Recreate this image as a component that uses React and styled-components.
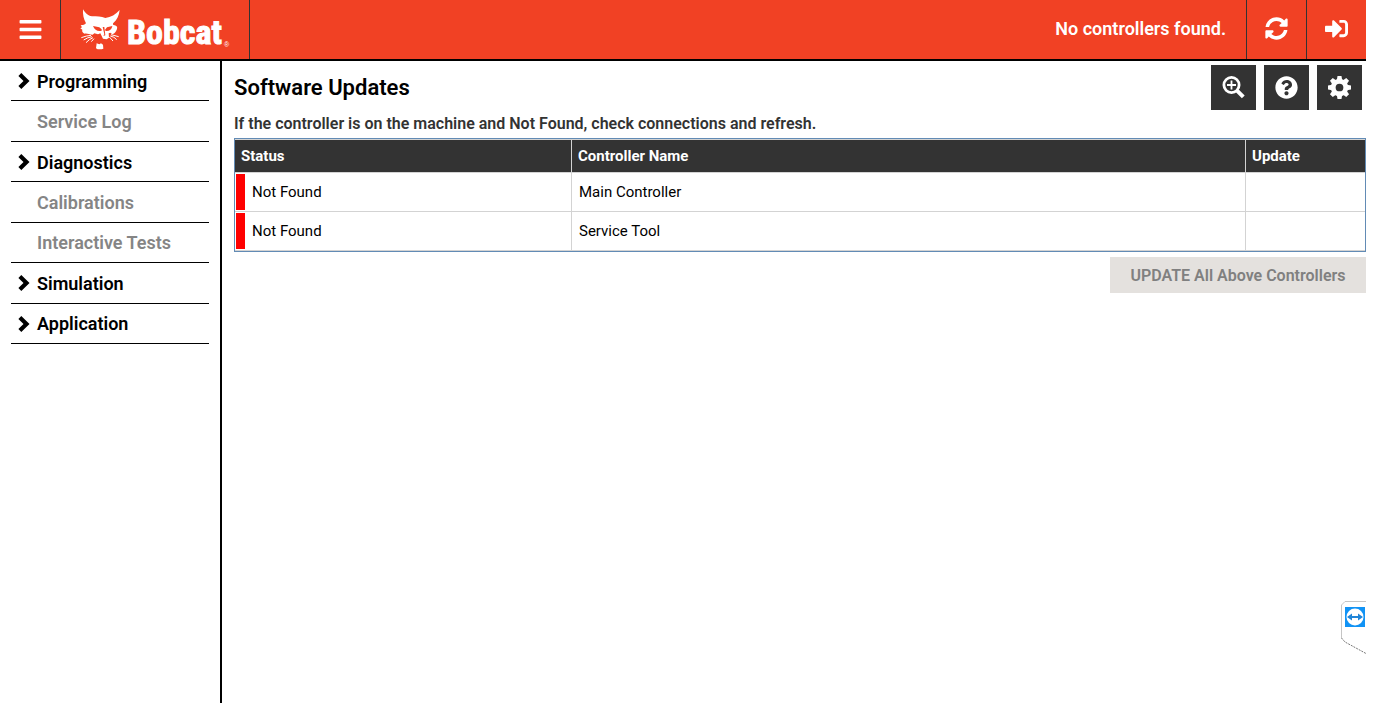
import React from "react";
import styled, { createGlobalStyle } from "styled-components";
import {
  FaBars,
  FaSyncAlt,
  FaSignInAlt,
  FaQuestionCircle,
} from "react-icons/fa";

const GlobalStyle = createGlobalStyle`
  * { box-sizing: border-box; }
  body { margin: 0; background: #fff; color: #000; font-family: Roboto, "Liberation Sans", sans-serif; }
  button { font-family: inherit; cursor: pointer; }
`;

const Page = styled.div`
  display: flex;
  flex-direction: column;
  min-height: 100vh;
  padding-right: 18px;
`;

const Header = styled.header`
  display: flex;
  align-items: stretch;
  height: 61px;
  background: #f14124;
  border-bottom: 2px solid #000;
  color: #fff;
`;

const HeaderButton = styled.button`
  display: flex;
  align-items: center;
  justify-content: center;
  width: ${(p) => (p.$first ? "61px" : "60px")};
  padding: ${(p) => (p.$first ? "0 0 1px" : "0 1px 2px 0")};
  border: 0 solid #333;
  border-width: ${(p) => (p.$first ? "0 1px 0 0" : "0 0 0 1px")};
  background: none;
  color: #fff;
  font-size: ${(p) => p.$size}px;
`;

const Brand = styled.a`
  display: flex;
  align-items: center;
  width: 189px;
  padding-left: 19px;
  gap: 7px;
  border-right: 1px solid #333;
  color: #fff;
  text-decoration: none;
`;

const Wordmark = styled.span`
  display: flex;
  align-items: flex-end;
  padding-top: 4px;
  font: bold 34px/40px "Liberation Sans Narrow", "Roboto Condensed", "Liberation Sans", sans-serif;
  -webkit-text-stroke: 1px #fff;

  small {
    padding-left: 2px;
    font: 7px/14px "Liberation Sans", sans-serif;
    -webkit-text-stroke: 0;
  }
`;

const HeaderMessage = styled.div`
  display: flex;
  align-items: center;
  margin-left: auto;
  padding: 0 20px 2px 0;
  font-size: 18px;
  font-weight: 600;
`;

const Body = styled.div`
  display: flex;
  flex: 1;
`;

const Sidebar = styled.nav`
  width: 222px;
  padding: 0 11px;
  border-right: 2px solid #000;
`;

const NavList = styled.ul`
  display: grid;
  grid-template-rows: repeat(7, 1fr);
  height: 283px;
  margin: 0;
  padding: 0;
  list-style: none;
`;

const NavItem = styled.li`
  display: flex;
  border-bottom: 1px solid #000;
`;

const NavButton = styled.button`
  display: grid;
  grid-template-columns: 13px 1fr;
  align-items: center;
  column-gap: 6px;
  width: 100%;
  padding: 1px 0 0 7px;
  border: 0;
  background: none;
  color: ${(p) => (p.disabled ? "#858585" : "#000")};
  font-size: 18px;
  font-weight: 600;
  text-align: left;

  span { grid-column: 2; }
`;

const Main = styled.main`
  flex: 1;
  min-width: 0;
  padding: 4px 0 0 12px;
`;

const TitleRow = styled.div`
  display: flex;
  align-items: center;
  justify-content: space-between;
  padding-right: 4px;
`;

const Title = styled.h1`
  margin: 0;
  font-size: 22px;
  font-weight: 600;
`;

const Tools = styled.div`
  display: flex;
  gap: 8px;
`;

const ToolButton = styled.button`
  display: flex;
  align-items: center;
  justify-content: center;
  width: 45px;
  height: 45px;
  padding: 0;
  border: 0;
  background: #333;
  color: #fff;
  font-size: 23px;
`;

const Hint = styled.p`
  margin: 0;
  padding: 4px 0;
  color: #333;
  font-size: 16px;
  line-height: 20px;
  font-weight: 600;
`;

const TableFrame = styled.div`
  border: 1px solid #628bb5;
`;

const Table = styled.table`
  width: 100%;
  border-collapse: separate;
  border-spacing: 0;
  border-top: 1px solid #d3d3d3;
  table-layout: fixed;
  font-size: 15px;
`;

const HeadCell = styled.th`
  width: ${(p) => p.$width || "auto"};
  height: 33px;
  padding: 0 6px;
  border: solid #d3d3d3;
  border-width: 0 ${(p) => (p.$last ? 0 : "1px")} 1px 0;
  background: #333;
  color: #fff;
  font-size: 15px;
  font-weight: 700;
  text-align: left;
`;

const Cell = styled.td`
  height: 39px;
  padding: ${(p) => (p.$status ? "1px" : "0 7px")};
  border: solid #d3d3d3;
  border-width: 0 ${(p) => (p.$last ? 0 : "1px")} 1px 0;
`;

const Status = styled.div`
  display: flex;
  align-items: center;
  height: 36px;
  padding-left: 7px;
  border-left: 9px solid ${(p) => p.$color};
`;

const Actions = styled.div`
  display: flex;
  justify-content: flex-end;
  padding-top: 5px;
`;

const UpdateButton = styled.button`
  width: 256px;
  height: 36px;
  padding: 0;
  border: 0;
  background: #e4e1de;
  color: #808080;
  font-size: 16px;
  font-weight: 600;
`;

const RemoteTab = styled.button`
  position: fixed;
  right: 18px;
  bottom: 49px;
  display: flex;
  padding: 0;
  border: 0;
  background: none;
`;

const NAV = [
  { label: "Programming", open: true },
  { label: "Service Log" },
  { label: "Diagnostics", open: true },
  { label: "Calibrations" },
  { label: "Interactive Tests" },
  { label: "Simulation", open: true },
  { label: "Application", open: true },
];

const ROWS = ["Main Controller", "Service Tool"];

const CatLogo = () => (
  <svg width="40" height="41" viewBox="12 15 120 123" aria-hidden="true">
    <path
      fill="#fff"
      d="M21 16C29 28 35 35 48 37C62 37 76 38 88 42C105 40 119 32 131 18C129 35 123 48 112 57C109 60 111 64 116 64C122 65 125 69 123 75C120 83 117 88 109 91L103 86L98 88L99 101L92 106L81 104L77 96L73 88L66 91L55 88L50 92C39 91 32 87 26 89C20 86 17 82 19 77L13 73L18 70L14 64L24 62L30 58C23 45 20 32 21 16Z"
    />
    <path fill="#f14124" d="M51 66L70 70L77 76L77 80C66 83 56 79 51 66ZM109 66L93 70L87 77L89 81C100 82 107 77 109 66ZM80 69H85L88 94L82 96L85 91Z" />
    <path fill="#fff" d="M62 118L70 121L75 118L81 122L82 134L77 136H65L60 133Z" />
    <path fill="none" stroke="#fff" strokeWidth="3" d="M45 94Q31 95 16 101M48 98Q35 100 23 108M51 101Q39 106 30 116M54 104L46 113M105 92L128 98M103 96Q115 98 122 107M100 99L111 111" />
  </svg>
);

const ChevronIcon = () => (
  <svg width="12" height="16" viewBox="0 0 12 16" aria-hidden="true">
    <path d="M3.3 0L11.5 8L3.3 16L.4 13.1L5.5 8L.4 2.9Z" fill="currentColor" />
  </svg>
);

const ZoomIcon = () => (
  <svg width="23" height="23" viewBox="0 0 23 23" fill="none" stroke="#fff" aria-hidden="true">
    <circle cx="9.5" cy="9" r="7.6" strokeWidth="2.8" />
    <path d="M15.3 14.8L21.3 20.8" strokeWidth="4" />
    <path d="M9.5 4.5v9M5 9h9" strokeWidth="1.8" />
  </svg>
);

const GearIcon = () => (
  <svg width="23" height="23" viewBox="-11 -11 22 22" fill="#fff" aria-hidden="true">
    <circle r="6" fill="none" stroke="#fff" strokeWidth="4.6" />
    {[0, 45, 90, 135].map((angle) => (
      <path
        key={angle}
        transform={`rotate(${angle})`}
        d="M-2.6 -7L-1.9 -11H1.9L2.6 -7ZM-2.6 7L-1.9 11H1.9L2.6 7Z"
      />
    ))}
  </svg>
);

const RemoteIcon = () => (
  <svg width="25" height="53" viewBox="0 0 25 53" aria-hidden="true">
    <path d="M25 .5H4L.5 4V37L4 41L25 52.5" fill="#fff" />
    <path d="M25 .5H4L.5 4V37" fill="none" stroke="#c5c5c5" />
    <path d="M.5 37L4 41L25 52.5" fill="none" stroke="#777" strokeDasharray="2 1" />
    <rect x="4" y="6" width="20" height="20" fill="#1193f5" />
    <circle cx="14" cy="16" r="8.5" fill="#fff" />
    <path d="M6 16l5-3.5v2.4h6v-2.4l5 3.5l-5 3.5v-2.4h-6v2.4z" fill="#2185d8" />
  </svg>
);

export default function App() {
  return (
    <Page>
      <GlobalStyle />
      <Header>
        <HeaderButton $first $size={25} aria-label="Menu"><FaBars /></HeaderButton>
        <Brand href="#">
          <CatLogo />
          <Wordmark>Bobcat<small>®</small></Wordmark>
        </Brand>
        <HeaderMessage>No controllers found.</HeaderMessage>
        <HeaderButton $size={23} aria-label="Refresh"><FaSyncAlt /></HeaderButton>
        <HeaderButton $size={23} aria-label="Sign in"><FaSignInAlt /></HeaderButton>
      </Header>
      <Body>
        <Sidebar>
          <NavList>
            {NAV.map((item) => (
              <NavItem key={item.label}>
                <NavButton disabled={!item.open}>
                  {item.open && <ChevronIcon />}
                  <span>{item.label}</span>
                </NavButton>
              </NavItem>
            ))}
          </NavList>
        </Sidebar>
        <Main>
          <TitleRow>
            <Title>Software Updates</Title>
            <Tools>
              <ToolButton aria-label="Zoom in"><ZoomIcon /></ToolButton>
              <ToolButton aria-label="Help"><FaQuestionCircle /></ToolButton>
              <ToolButton aria-label="Settings"><GearIcon /></ToolButton>
            </Tools>
          </TitleRow>
          <Hint>If the controller is on the machine and Not Found, check connections and refresh.</Hint>
          <TableFrame>
            <Table>
              <thead>
                <tr>
                  <HeadCell $width="337px">Status</HeadCell>
                  <HeadCell>Controller Name</HeadCell>
                  <HeadCell $width="119px" $last>Update</HeadCell>
                </tr>
              </thead>
              <tbody>
                {ROWS.map((name) => (
                  <tr key={name}>
                    <Cell $status><Status $color="#f00">Not Found</Status></Cell>
                    <Cell>{name}</Cell>
                    <Cell $last />
                  </tr>
                ))}
              </tbody>
            </Table>
          </TableFrame>
          <Actions>
            <UpdateButton disabled>UPDATE All Above Controllers</UpdateButton>
          </Actions>
        </Main>
      </Body>
      <RemoteTab aria-label="Remote session"><RemoteIcon /></RemoteTab>
    </Page>
  );
}
